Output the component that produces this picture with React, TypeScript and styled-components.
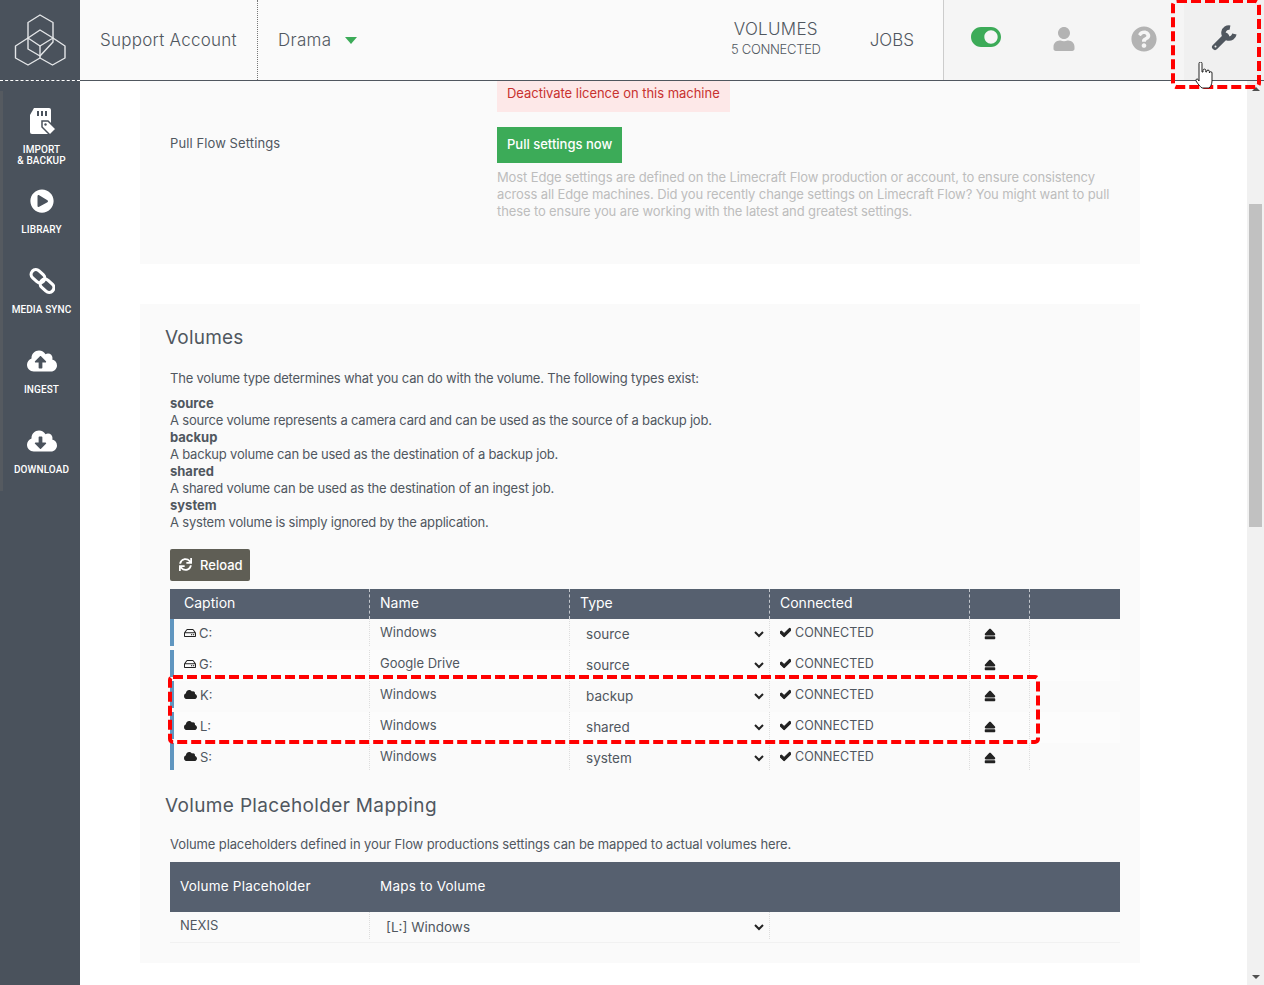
import styled, { createGlobalStyle } from "styled-components";
import {
  FaCheck,
  FaCloud,
  FaCloudDownloadAlt,
  FaCloudUploadAlt,
  FaEject,
  FaPlayCircle,
  FaQuestionCircle,
  FaRegHdd,
  FaSync,
  FaToggleOn,
  FaUser,
} from "react-icons/fa";

const GlobalStyle = createGlobalStyle`
  html, body {
    margin: 0;
    height: 100%;
    overflow: hidden;
    background: #fff;
    font-family: Inter, "Liberation Sans", sans-serif;
    color: #50575f;
  }
  * { box-sizing: border-box; }
`;

const Page = styled.div`
  position: relative;
  height: 100vh;
  display: flex;
  flex-direction: column;
  overflow: hidden;
`;

const Header = styled.header`
  height: 81px;
  flex: none;
  display: flex;
  background: #fafafa;
  border-bottom: 1px solid #50575f;
`;

const LogoBox = styled.div`
  width: 80px;
  margin-bottom: -1px;
  background: #4a525c;
  border-bottom: 1px dashed #fff;
  display: flex;
  align-items: center;
  justify-content: center;
`;

const Account = styled.div`
  width: 178px;
  padding-left: 20px;
  display: flex;
  align-items: center;
  font-size: 17px;
  font-weight: 300;
  letter-spacing: 0.25px;
  border-right: 1px dotted #777;
`;

const Production = styled.div`
  padding-left: 20px;
  display: flex;
  align-items: center;
  font-size: 17px;
  font-weight: 300;
  letter-spacing: 0.3px;
`;

const Caret = styled.span`
  width: 0;
  height: 0;
  margin-left: 14px;
  border-left: 6px solid transparent;
  border-right: 6px solid transparent;
  border-top: 7px solid #3cab58;
`;

const Spacer = styled.div`
  flex: 1;
`;

const NavItem = styled.div<{ $pad: number }>`
  padding: 0 ${(p) => p.$pad}px;
  display: flex;
  flex-direction: column;
  align-items: center;
  justify-content: center;
  font-size: 17px;
  font-weight: 300;
`;

const VolumesItem = styled(NavItem)`
  padding-bottom: 4px;
  letter-spacing: 0.3px;
`;

const NavSub = styled.span`
  margin-top: 2px;
  font-size: 13px;
  font-weight: 300;
  letter-spacing: -0.3px;
`;

const Tools = styled.div`
  width: 321px;
  display: flex;
  background: #f5f5f5;
  border-left: 1px solid #ccc;
`;

const ToolButton = styled.div<{ $active?: boolean; $color: string }>`
  width: 80px;
  display: flex;
  align-items: center;
  justify-content: center;
  padding-bottom: 3px;
  color: ${(p) => p.$color};
  background: ${(p) => (p.$active ? "#f0f0f0" : "transparent")};
`;

const ToggleButton = styled(ToolButton)`
  padding: 0 0 7px 4px;
`;

const WrenchButton = styled(ToolButton)`
  padding-bottom: 5px;
`;

const Body = styled.div`
  flex: 1;
  min-height: 0;
  display: flex;
`;

const Sidebar = styled.nav`
  width: 80px;
  flex: none;
  padding-top: 10px;
  background: #4a525c;
`;

const SideItem = styled.div`
  height: 80px;
  padding-top: 15px;
  display: flex;
  flex-direction: column;
  align-items: center;
  color: #fff;
  border-left: 3px solid #555a60;
`;

const SideIcon = styled.div`
  height: 30px;
  display: flex;
  align-items: center;
  justify-content: center;
`;

const SideLabel = styled.div`
  margin-top: 8px;
  font-family: Roboto, "Liberation Sans", sans-serif;
  font-size: 10px;
  font-weight: 500;
  line-height: 11px;
  letter-spacing: 0.1px;
  text-align: center;
  text-transform: uppercase;
`;

const Main = styled.main`
  flex: 1;
  min-width: 0;
  overflow: hidden;
  padding: 0 107px 0 60px;
`;

const Panel = styled.section`
  background: #fafafa;
`;

const SettingsPanel = styled(Panel)`
  height: 183px;
  margin-bottom: 40px;
  padding-left: 30px;
`;

const DeactivateRow = styled.div`
  margin-left: 327px;
`;

const Deactivate = styled.div`
  display: inline-block;
  height: 31px;
  padding: 4px 10px 0;
  background: #fde8e8;
  color: #c8322f;
  font-size: 13px;
  line-height: 17px;
  letter-spacing: -0.03px;
`;

const SettingRow = styled.div`
  margin-top: 15px;
  display: grid;
  grid-template-columns: 327px 1fr;
`;

const SettingLabel = styled.div`
  padding-top: 8px;
  font-size: 13px;
  line-height: 17px;
  letter-spacing: 0.1px;
`;

const PullButton = styled.div`
  display: inline-block;
  height: 36px;
  padding: 0 10px;
  background: #3cab58;
  color: #fff;
  font-size: 13px;
  font-weight: 500;
  line-height: 34px;
`;

const Hint = styled.p`
  margin: 6px 0 0;
  color: #bdbdbd;
  font-size: 13px;
  line-height: 17px;
  letter-spacing: -0.12px;
`;

const VolumesPanel = styled(Panel)`
  height: 659px;
  padding: 22px 20px 0 25px;
`;

const Title = styled.h2`
  margin: 0;
  font-size: 19px;
  font-weight: 400;
  line-height: 24px;
  letter-spacing: 0.2px;
`;

const Inset = styled.div`
  margin-left: 5px;
`;

const Text = styled.p`
  margin: 0;
  font-size: 13px;
  line-height: 17px;
  letter-spacing: -0.2px;
`;

const Intro = styled(Text)`
  margin-top: 20px;
`;

const Types = styled.div`
  margin-top: 8px;
`;

const TypeName = styled.div`
  font-size: 13px;
  font-weight: 700;
  line-height: 17px;
`;

const ReloadButton = styled.div`
  margin-top: 18px;
  width: 80px;
  height: 32px;
  display: flex;
  align-items: center;
  gap: 8px;
  padding: 0 0 1px 9px;
  background: #5f5e55;
  border-radius: 2px;
  color: #fff;
  font-size: 13px;
  font-weight: 500;
`;

const volumeColumns = "200px 200px 200px 200px 60px 90px";

const TableHead = styled.div`
  margin-top: 8px;
  height: 30px;
  display: grid;
  grid-template-columns: ${volumeColumns};
  background: #56606f;
  color: #fff;
  font-size: 14px;
  line-height: 28px;
`;

const HeadCell = styled.div<{ $pad?: number }>`
  padding-left: ${(p) => p.$pad ?? 10}px;
  border-right: 1px dashed #c4c8ce;
  &:last-child {
    border-right: none;
  }
`;

const VolumeRow = styled.div<{ $light: boolean }>`
  height: 31px;
  display: grid;
  grid-template-columns: ${volumeColumns};
  align-items: start;
  background: ${(p) => (p.$light ? "#fcfcfc" : "transparent")};
  font-size: 13px;
`;

const Cell = styled.div`
  height: 27px;
  display: flex;
  align-items: center;
  padding-left: 10px;
  border-right: 1px dotted #ddd;
  &:last-child {
    border-right: none;
  }
`;

const NameCell = styled(Cell)`
  padding-bottom: 2px;
`;

const CaptionCell = styled(Cell)`
  gap: 3px;
  border-left: 4px solid #6096c0;
  color: #50575f;
  svg {
    color: #222;
  }
`;

const chevron =
  "url(\"data:image/svg+xml,%3Csvg xmlns='http://www.w3.org/2000/svg' width='10' height='7'%3E%3Cpath d='M1 1l4 4 4-4' fill='none' stroke='%23222' stroke-width='2'/%3E%3C/svg%3E\")";

const Select = styled.select`
  width: 100%;
  height: 27px;
  padding: 2px 0 0 16px;
  border: none;
  outline: none;
  appearance: none;
  background: transparent ${chevron} no-repeat right 5px top 12px;
  color: #50575f;
  font-family: inherit;
  font-size: 13.5px;
  font-weight: 400;
`;

const SelectCell = styled(Cell)`
  padding-left: 0;
`;

const Status = styled(Cell)`
  gap: 4px;
  font-size: 12.5px;
  svg {
    color: #222;
    stroke-width: 50;
  }
`;

const EjectCell = styled(Cell)`
  padding-left: 14px;
  padding-top: 2px;
  color: #222;
`;

const MappingTitle = styled(Title)`
  margin-top: 20px;
  letter-spacing: 0.35px;
`;

const MappingIntro = styled(Text)`
  margin-top: 18px;
  letter-spacing: -0.11px;
`;

const mappingColumns = "200px 400px 350px";

const MappingHead = styled.div`
  margin-top: 9px;
  height: 50px;
  display: grid;
  grid-template-columns: ${mappingColumns};
  align-items: center;
  padding-bottom: 2px;
  background: #56606f;
  color: #fff;
  font-size: 13.5px;
`;

const MappingHeadCell = styled.div`
  padding-left: 10px;
  letter-spacing: 0.2px;
`;

const MappingRow = styled.div`
  height: 31px;
  display: grid;
  grid-template-columns: ${mappingColumns};
  align-items: start;
  border-bottom: 1px solid #f1f1f1;
  font-size: 13px;
`;

const Scrollbar = styled.div`
  width: 17px;
  flex: none;
  display: flex;
  flex-direction: column;
  align-items: center;
  justify-content: space-between;
  background: #f1f1f1;
  position: relative;
`;

const ScrollArrow = styled.span<{ $up?: boolean }>`
  width: 0;
  height: 0;
  margin: 6px 0;
  border-left: 4px solid transparent;
  border-right: 4px solid transparent;
  ${(p) => (p.$up ? "border-bottom: 4px solid #505050;" : "border-top: 4px solid #505050;")}
`;

const ScrollThumb = styled.div`
  position: absolute;
  top: 123px;
  left: 2px;
  width: 13px;
  height: 323px;
  background: #c1c1c1;
`;

const AnnotationLayer = styled.svg`
  position: absolute;
  left: 0;
  top: 0;
  pointer-events: none;
`;

const Pointer = styled.svg`
  position: absolute;
  left: 1195px;
  top: 62px;
`;

const Logo = () => (
  <svg width="52" height="52" viewBox="0 0 52 52" fill="none" stroke="#e4e6e8" strokeWidth="1.4" strokeLinejoin="round">
    <path d="M26 1 L39 8.5 V28 L26 42 L14 35 V8.5 Z" />
    <path d="M14 24 L26 16 L39 24 L26 32 Z" />
    <path d="M26 32 V44" />
    <path d="M14 24 L1.5 32 V44 L14 51 L26 44 L38.5 51 L51 44 V32 L39 24" />
  </svg>
);

const ImportIcon = () => (
  <svg width="28" height="28" viewBox="0 0 28 28">
    <path d="M6 1 H21 a2 2 0 0 1 2 2 V27 H4 a2 2 0 0 1 -2 -2 V8 Z" fill="#fff" />
    <path d="M9 4 h2 v5 h-2 z M13 4 h2 v5 h-2 z M17 4 h2 v5 h-2 z" fill="#4a525c" />
    <path d="M14 14 l6 0 l8 8 l-6 6 l-8 -8 Z" fill="#fff" stroke="#4a525c" strokeWidth="1.5" />
    <circle cx="17.5" cy="17.5" r="1.2" fill="#4a525c" />
  </svg>
);

const ChainIcon = () => (
  <svg width="26" height="26" viewBox="0 0 26 26" fill="none" stroke="#fff" strokeWidth="3.2">
    <rect x="1.5" y="3.5" width="15" height="9.5" rx="4.7" transform="rotate(42 9 8.2)" />
    <rect x="10.5" y="13" width="15" height="9.5" rx="4.7" transform="rotate(42 18 17.8)" />
  </svg>
);

const WrenchIcon = () => (
  <svg width="26" height="26" viewBox="0 0 26 26" fill="none" stroke="#50575f" strokeLinecap="round">
    <path d="M4 22 L15 11" strokeWidth="6" />
    <path d="M19 2.6 A5.5 5.5 0 1 0 23.4 9" strokeWidth="4.5" strokeLinecap="butt" />
    <circle cx="4.5" cy="21.5" r="1" fill="#f0f0f0" stroke="none" />
  </svg>
);

const HandCursor = () => (
  <Pointer width="18" height="27" viewBox="0 0 18 27">
    <path
      d="M4 1.5 a1.5 1.5 0 0 1 3 0 V10 h1 V8.5 a1.4 1.4 0 0 1 2.8 0 V10 h.8 V9.5 a1.4 1.4 0 0 1 2.8 0 V11 a1.3 1.3 0 0 1 2.6 0 V19 c0 3 -1.5 6 -3 7 H7 c-2 -1.5 -4 -4 -6 -7 c-.8 -1.3 1 -2.8 2 -1.6 L4 19 Z"
      fill="#fff"
      stroke="#222"
      strokeWidth="1"
    />
  </Pointer>
);

const typeOptions = ["source", "backup", "shared", "system"];

const volumes = [
  { letter: "C:", name: "Windows", type: "source", cloud: false },
  { letter: "G:", name: "Google Drive", type: "source", cloud: false },
  { letter: "K:", name: "Windows", type: "backup", cloud: true },
  { letter: "L:", name: "Windows", type: "shared", cloud: true },
  { letter: "S:", name: "Windows", type: "system", cloud: true },
];

const sideItems = [
  { label: ["Import", "& Backup"], icon: <ImportIcon /> },
  { label: ["Library"], icon: <FaPlayCircle size={24} /> },
  { label: ["Media Sync"], icon: <ChainIcon /> },
  { label: ["Ingest"], icon: <FaCloudUploadAlt size={30} /> },
  { label: ["Download"], icon: <FaCloudDownloadAlt size={30} /> },
];

const typeHelp = [
  ["source", "A source volume represents a camera card and can be used as the source of a backup job."],
  ["backup", "A backup volume can be used as the destination of a backup job."],
  ["shared", "A shared volume can be used as the destination of an ingest job."],
  ["system", "A system volume is simply ignored by the application."],
];

const App = () => {
  return (
    <Page>
      <GlobalStyle />
      <Header>
        <LogoBox>
          <Logo />
        </LogoBox>
        <Account>Support Account</Account>
        <Production>
          Drama
          <Caret />
        </Production>
        <Spacer />
        <VolumesItem $pad={20}>
          VOLUMES
          <NavSub>5 CONNECTED</NavSub>
        </VolumesItem>
        <NavItem $pad={29}>JOBS</NavItem>
        <Tools>
          <ToggleButton $color="#3cab58">
            <FaToggleOn size={30} />
          </ToggleButton>
          <ToolButton $color="#b3b3b3">
            <FaUser size={24} />
          </ToolButton>
          <ToolButton $color="#b3b3b3">
            <FaQuestionCircle size={26} />
          </ToolButton>
          <WrenchButton $active $color="#50575f">
            <WrenchIcon />
          </WrenchButton>
        </Tools>
      </Header>
      <Body>
        <Sidebar>
          {sideItems.map((item) => (
            <SideItem key={item.label[0]}>
              <SideIcon>{item.icon}</SideIcon>
              <SideLabel>
                {item.label.map((line) => (
                  <div key={line}>{line}</div>
                ))}
              </SideLabel>
            </SideItem>
          ))}
        </Sidebar>
        <Main>
          <SettingsPanel>
            <DeactivateRow>
              <Deactivate>Deactivate licence on this machine</Deactivate>
            </DeactivateRow>
            <SettingRow>
              <SettingLabel>Pull Flow Settings</SettingLabel>
              <div>
                <PullButton>Pull settings now</PullButton>
                <Hint>
                  Most Edge settings are defined on the Limecraft Flow production or account, to ensure consistency
                  <br />
                  across all Edge machines. Did you recently change settings on Limecraft Flow? You might want to pull
                  <br />
                  these to ensure you are working with the latest and greatest settings.
                </Hint>
              </div>
            </SettingRow>
          </SettingsPanel>
          <VolumesPanel>
            <Title>Volumes</Title>
            <Inset>
              <Intro>The volume type determines what you can do with the volume. The following types exist:</Intro>
              <Types>
                {typeHelp.map(([name, text]) => (
                  <div key={name}>
                    <TypeName>{name}</TypeName>
                    <Text>{text}</Text>
                  </div>
                ))}
              </Types>
              <ReloadButton>
                <FaSync size={13} />
                Reload
              </ReloadButton>
              <TableHead>
                <HeadCell $pad={14}>Caption</HeadCell>
                <HeadCell>Name</HeadCell>
                <HeadCell>Type</HeadCell>
                <HeadCell>Connected</HeadCell>
                <HeadCell />
                <HeadCell />
              </TableHead>
              {volumes.map((v, i) => (
                <VolumeRow key={v.letter} $light={i % 2 === 1}>
                  <CaptionCell>
                    {v.cloud ? <FaCloud size={13} /> : <FaRegHdd size={12} />}
                    {v.letter}
                  </CaptionCell>
                  <NameCell>{v.name}</NameCell>
                  <SelectCell>
                    <Select defaultValue={v.type}>
                      {typeOptions.map((o) => (
                        <option key={o}>{o}</option>
                      ))}
                    </Select>
                  </SelectCell>
                  <Status>
                    <FaCheck size={11} />
                    CONNECTED
                  </Status>
                  <EjectCell>
                    <FaEject size={12} />
                  </EjectCell>
                  <Cell />
                </VolumeRow>
              ))}
            </Inset>
            <MappingTitle>Volume Placeholder Mapping</MappingTitle>
            <Inset>
              <MappingIntro>
                Volume placeholders defined in your Flow productions settings can be mapped to actual volumes here.
              </MappingIntro>
              <MappingHead>
                <MappingHeadCell>Volume Placeholder</MappingHeadCell>
                <MappingHeadCell>Maps to Volume</MappingHeadCell>
              </MappingHead>
              <MappingRow>
                <NameCell>NEXIS</NameCell>
                <SelectCell>
                  <Select defaultValue="[L:] Windows">
                    <option>[L:] Windows</option>
                    <option>[K:] Windows</option>
                  </Select>
                </SelectCell>
                <Cell />
              </MappingRow>
            </Inset>
          </VolumesPanel>
        </Main>
        <Scrollbar>
          <ScrollArrow $up />
          <ScrollThumb />
          <ScrollArrow />
        </Scrollbar>
      </Body>
      <AnnotationLayer width="1264" height="985" fill="none" stroke="#f00" strokeWidth="4" strokeDasharray="10 4">
        <rect x="1173" y="1" width="86" height="86" rx="4" />
        <rect x="170" y="677" width="868" height="65" rx="3" />
      </AnnotationLayer>
      <HandCursor />
    </Page>
  );
};

export default App;
